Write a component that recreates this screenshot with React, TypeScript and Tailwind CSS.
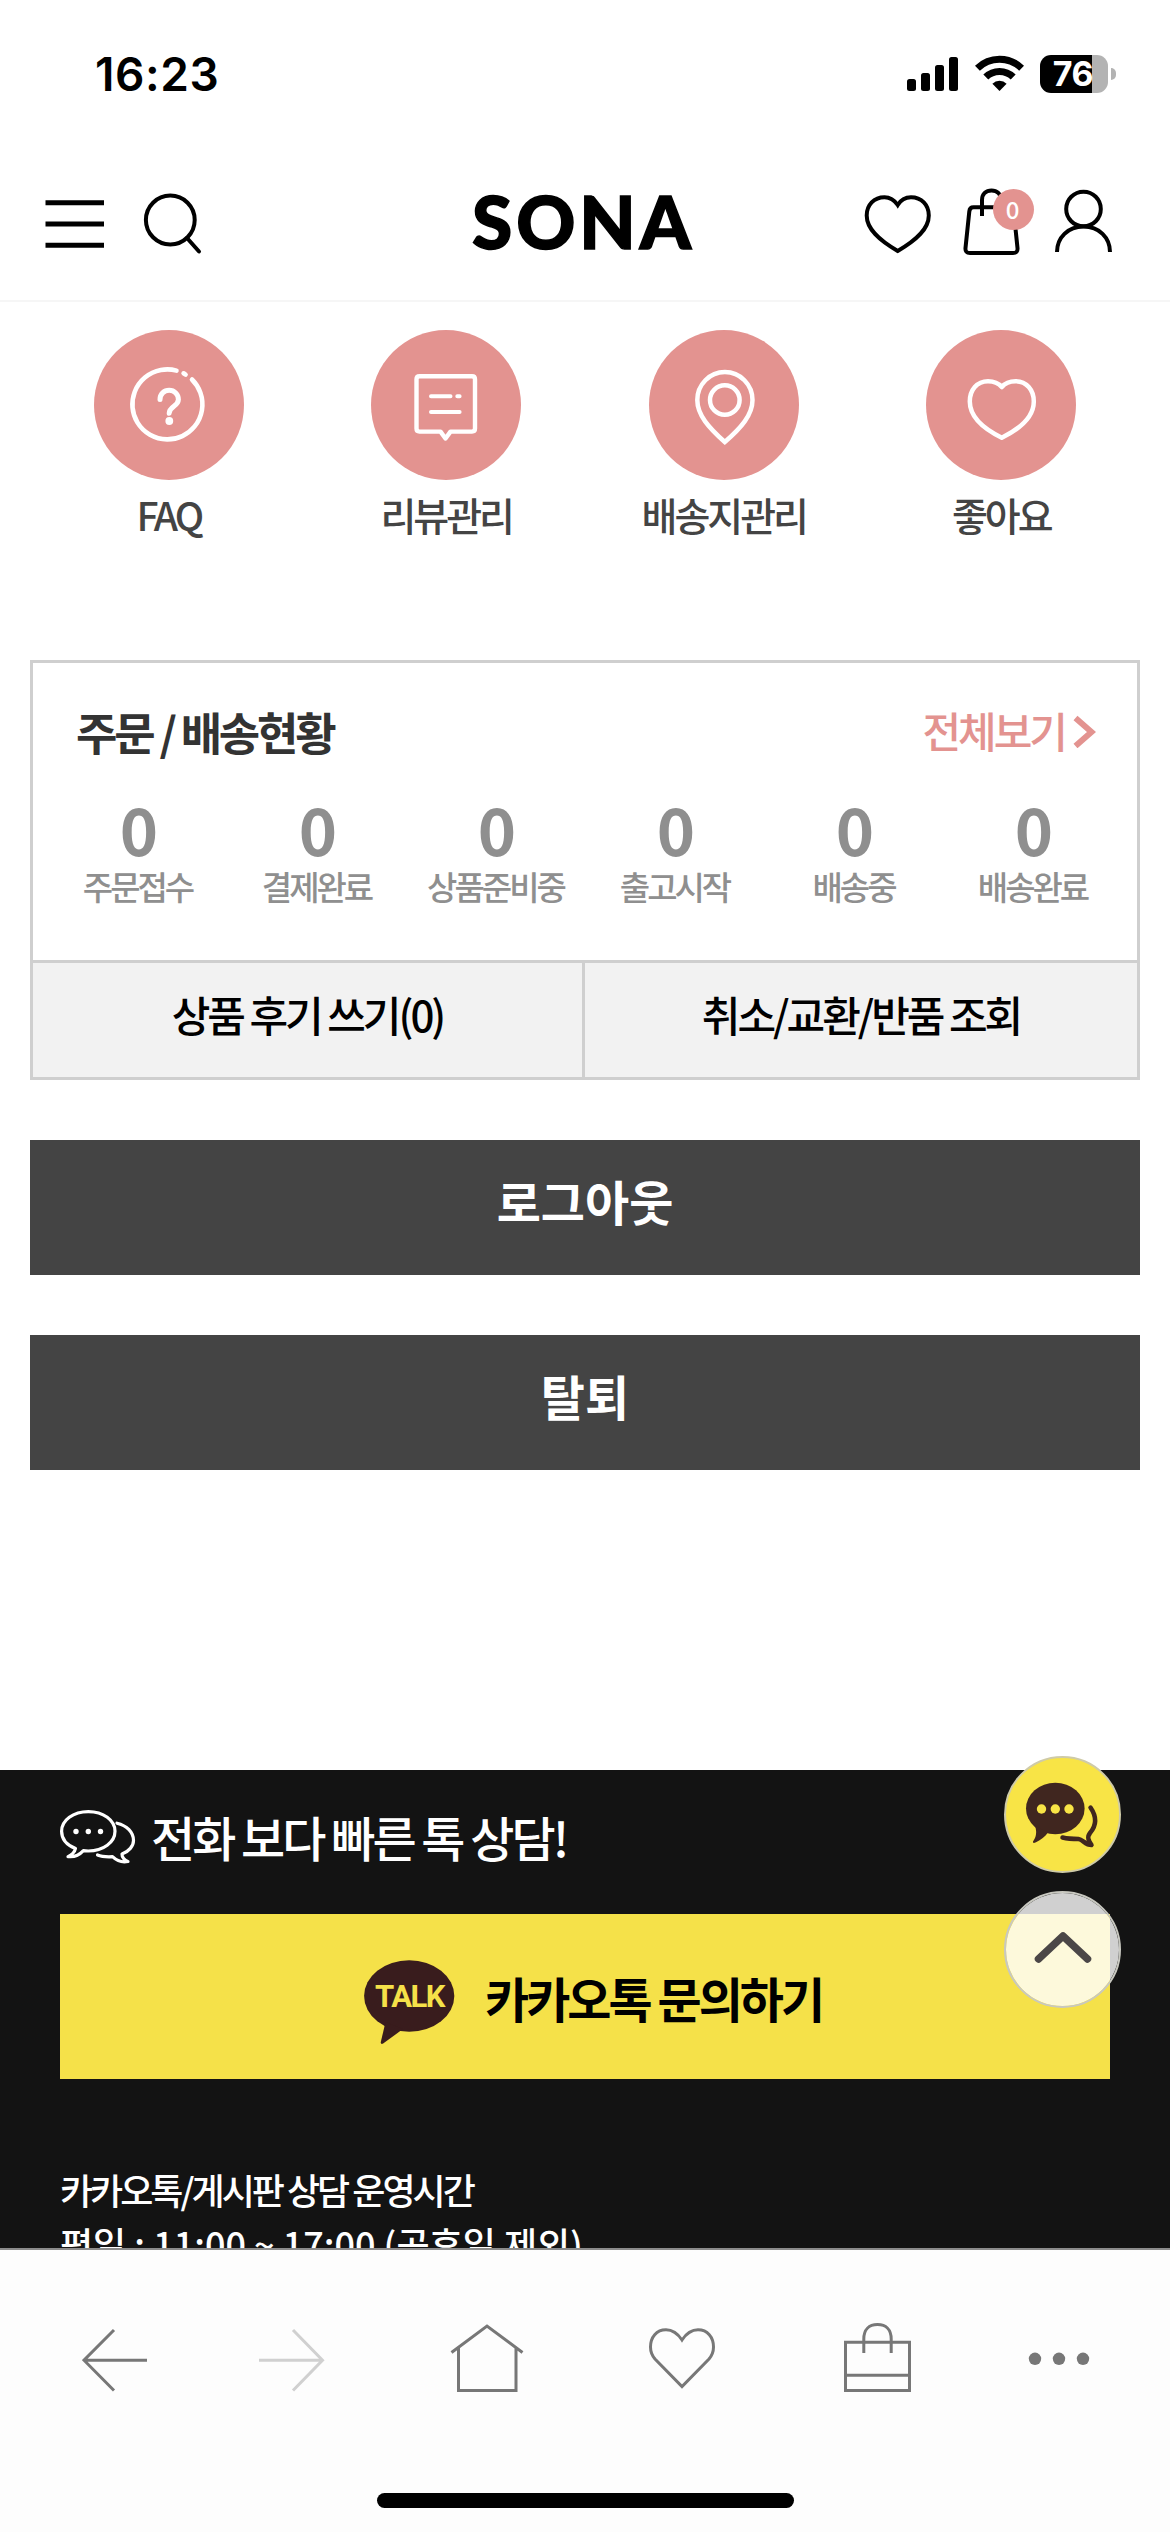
import type { ReactNode } from "react";

const menus = [
  { label: "FAQ", icon: <FaqIcon /> },
  { label: "리뷰관리", icon: <ReviewIcon /> },
  { label: "배송지관리", icon: <PinIcon /> },
  { label: "좋아요", icon: <LikeIcon /> },
];

const orderSteps = [
  { label: "주문접수", count: 0 },
  { label: "결제완료", count: 0 },
  { label: "상품준비중", count: 0 },
  { label: "출고시작", count: 0 },
  { label: "배송중", count: 0 },
  { label: "배송완료", count: 0 },
];

function FaqIcon() {
  return (
    <>
      <path d="M98 49.5A35 35 0 1 1 82.5 40.6" strokeWidth="4.6" />
      <path d="M89.6 43.3L91.6 44.6" strokeWidth="4.6" />
      <path d="M66 69.5C66 64 70 60.3 75.2 60.3S84.4 64.2 84.4 69.5C84.4 76.5 75.4 76 75.2 83.3" strokeWidth="5" />
      <circle cx="75.3" cy="91" r="3.9" fill="#fff" stroke="none" />
    </>
  );
}

function ReviewIcon() {
  return (
    <>
      <path
        d="M48.5 46.3H101Q104 46.3 104 49.3V98.6Q104 101.6 101 101.6H79.5L74.5 108.5L69.5 101.6H48.5Q45.5 101.6 45.5 98.6V49.3Q45.5 46.3 48.5 46.3Z"
        strokeWidth="4.4"
      />
      <path d="M60 66.3H79.5M86.3 66.3H88.6M60 82H88.6" strokeWidth="4" />
    </>
  );
}

function PinIcon() {
  return (
    <>
      <path d="M75.8 112C60 98 48.3 85 48.3 70A27.6 28 0 0 1 103.5 70C103.5 85 92 98 75.8 112Z" strokeWidth="4.5" strokeLinejoin="miter" />
      <circle cx="75.8" cy="70" r="14.8" strokeWidth="4.5" />
    </>
  );
}

function LikeIcon() {
  return (
    <path
      d="M75.8 57C72 52.5 67 51.2 62 51.2C51 51.2 43.8 60 43.8 71.5C43.8 88 58 99 75.8 107.7C93.5 99 107.8 88 107.8 71.5C107.8 60 100.5 51.2 89.5 51.2C84.5 51.2 79.5 52.5 75.8 57Z"
      strokeWidth="4.5"
    />
  );
}

function StatusBar() {
  return (
    <div className="flex h-[149px] items-start justify-between pr-[54px] pl-[95px] font-['Inter',sans-serif] text-black">
      <span className="mt-[46px] text-[46px] leading-[57px] font-semibold tracking-[0.6px]">16:23</span>
      <div className="mt-[55px] flex items-center">
        <svg width="52" height="38" viewBox="0 0 52 38">
          <rect x="0" y="24" width="9" height="12" rx="2.5" />
          <rect x="14" y="18" width="9" height="18" rx="2.5" />
          <rect x="28" y="10" width="9" height="26" rx="2.5" />
          <rect x="42" y="2" width="9" height="34" rx="2.5" />
        </svg>
        <svg className="ml-4" width="49" height="38" viewBox="0 0 49 38" fill="none" stroke="#000">
          <path d="M2.4 13.2A31.5 31.5 0 0 1 46.6 13.2" strokeWidth="7" />
          <path d="M10.8 22A19.5 19.5 0 0 1 38.2 22" strokeWidth="7" />
          <path d="M24.5 36L17.4 28.8A10 10 0 0 1 31.6 28.8Z" fill="#000" stroke="none" />
        </svg>
        <div className="ml-4 flex h-[38px] w-[68px] items-center justify-center rounded-[11px] bg-[linear-gradient(to_right,#000_52px,#b3b3b3_52px)] pr-0.5">
          <span className="text-[34px] leading-[38px] font-bold tracking-[-0.5px] text-white">76</span>
        </div>
        <div className="ml-[3px] h-3 w-[5px] rounded-r-full bg-[#b3b3b3]" />
      </div>
    </div>
  );
}

function Header() {
  return (
    <header className="grid h-[153px] grid-cols-[1fr_auto_1fr] items-start border-b-2 border-[#f6f6f6] pr-[57px] pl-[45px]">
      <div className="mt-10 flex">
        <svg width="60" height="68" viewBox="0 0 60 68" fill="none" stroke="#000" strokeWidth="5">
          <path d="M.5 13.8H59M.5 35H59M.5 56.3H59" />
        </svg>
        <svg className="ml-[38px]" width="60" height="68" viewBox="0 0 60 68" fill="none" stroke="#000" strokeWidth="4">
          <circle cx="27.3" cy="31" r="24.4" />
          <path d="M44 49L56 62.5" strokeLinecap="round" />
        </svg>
      </div>
      <h1 className="mt-8 pl-[9px] font-['Lato',sans-serif] text-[73px] leading-[80px] font-black tracking-[4px] text-black [-webkit-text-stroke:1.5px_#000]">
        SONA
      </h1>
      <div className="mt-[39px] flex justify-end">
        <svg width="70" height="70" viewBox="-1 -6 70 70" fill="none" stroke="#000" strokeWidth="4">
          <path d="M33.7 11C30 5.5 25.5 3.2 20.5 3.2C10 3.2 2.7 11 2.7 21.5C2.7 35 15 46 33.7 57C52.4 46 64.8 35 64.8 21.5C64.8 11 57.5 3.2 47 3.2C41.5 3.2 37 5.5 33.7 11Z" />
        </svg>
        <div className="relative ml-[29px] h-[70px] w-[60px]">
          <svg width="60" height="70" viewBox="0 0 60 70" fill="none" stroke="#000" strokeWidth="4">
            <path d="M11.5 19.3H47.5Q51.3 19.3 51.7 23.5L55.5 60Q56 65 51 65H8Q3 65 3.5 60L7.3 23.5Q7.7 19.3 11.5 19.3Z" />
            <path d="M20 28V12C20 6 24 2.5 29.5 2.5S39 6 39 12V28" />
          </svg>
          <span className="absolute top-px left-[31px] flex size-[41px] items-center justify-center rounded-full bg-[#e39390] pr-0.5 pb-0.5 text-[24px] leading-none font-medium text-white">
            0
          </span>
        </div>
        <svg className="ml-[31px]" width="60" height="70" viewBox="0 0 60 70" fill="none" stroke="#000" strokeWidth="4">
          <circle cx="30.5" cy="21" r="17.3" />
          <path d="M4 64C4 49.5 15 38.5 30.5 38.5S57 49.5 57 64" />
        </svg>
      </div>
    </header>
  );
}

function OrderCard() {
  return (
    <section className="mx-[30px] mt-[114px] h-[420px] border-[3px] border-[#cfcfcf]">
      <div className="flex h-[297px] flex-col">
        <div className="flex items-start justify-between pt-[36px] pr-[41px] pl-[43px]">
          <h2 className="text-[45px] leading-[66px] font-bold tracking-[-3.2px] text-[#333]">주문 / 배송현황</h2>
          <a className="-mt-px flex items-center text-[42px] leading-[63px] font-medium tracking-[-3px] text-[#e39390]">
            전체보기
            <svg className="mt-0.5 ml-[7px]" width="24" height="34" viewBox="0 0 24 34" fill="none" stroke="#e39390" strokeWidth="6">
              <path d="M3.5 4L19.5 18L3.5 32" />
            </svg>
          </a>
        </div>
        <ul className="grid grid-cols-6 px-[15px] text-center text-[#8f8f8f]">
          {orderSteps.map(step => (
            <li key={step.label} className="flex flex-col whitespace-nowrap">
              <b className="mt-[28px] text-[65px] leading-[70px] font-bold tracking-[-3px]">{step.count}</b>
              <span className="text-[33px] leading-[46px] font-medium tracking-[-3px]">{step.label}</span>
            </li>
          ))}
        </ul>
      </div>
      <div className="grid h-[117px] grid-cols-[552px_1fr] border-t-[3px] border-[#cfcfcf] bg-[#f2f2f2] text-center text-[42px] leading-[101px] font-medium tracking-[-3px] text-black">
        <a className="border-r-[3px] border-[#cfcfcf]">상품 후기 쓰기(0)</a>
        <a>취소/교환/반품 조회</a>
      </div>
    </section>
  );
}

function ChatLineIcon() {
  return (
    <svg width="76" height="56" viewBox="0 0 76 56" fill="none" stroke="#fff" strokeWidth="3.2" strokeLinecap="round" strokeLinejoin="round">
      <path d="M15.5 38.5C6.5 35 1.6 28.5 1.6 21.3C1.6 10.3 13.3 1.6 28.3 1.6S55 10.3 55 21.3S43.3 41 28.3 41C26.6 41 25 40.9 23.4 40.7C19 45.5 13.8 47.3 8 46.6C12 44.7 14.7 42 15.5 38.5Z" />
      <path d="M57 13.2C67 15.5 73.5 22.5 73.5 30.5C73.5 36 69 41.5 62 44C61.8 47 64.5 50.5 68 51.5C61 53 56.5 50.5 52.5 46.7C47 47 41 46.5 37.5 45" />
      <g fill="#fff" stroke="none">
        <circle cx="16" cy="21.5" r="2.7" />
        <circle cx="28.3" cy="21.5" r="2.7" />
        <circle cx="40.5" cy="21.5" r="2.7" />
      </g>
    </svg>
  );
}

function Footer() {
  return (
    <footer className="mt-[300px] h-[478px] overflow-hidden bg-[#131313] px-[60px] text-white">
      <div className="flex pt-10">
        <ChatLineIcon />
        <h3 className="-mt-[10px] ml-[15px] h-[74px] text-[48px] leading-[72px] font-medium tracking-[-3px]">전화 보다 빠른 톡 상담!</h3>
      </div>
      <a className="mt-[40px] flex h-[165px] items-start bg-[#f5e149] text-black">
        <span className="relative mt-[46px] ml-[304px] block h-[86px] w-[91px]">
          <svg width="91" height="86" viewBox="0 0 91 86" fill="#391c1d">
            <ellipse cx="45.2" cy="36" rx="45.1" ry="35.7" />
            <path d="M21.5 62L16.7 82.5Q17 85 19.5 83.3L39 69Z" />
          </svg>
          <span className="absolute top-0 left-0 w-full text-center font-['Roboto',sans-serif] text-[31px] leading-[74px] font-bold tracking-[-1.5px] text-[#f5e149]">
            TALK
          </span>
        </span>
        <b className="mt-[47px] ml-[30px] text-[48px] leading-[72px] font-bold tracking-[-3px]">카카오톡 문의하기</b>
      </a>
      <p className="mt-[83px] text-[36px] leading-[54px] font-medium tracking-[-3px]">카카오톡/게시판 상담 운영시간</p>
      <p className="text-[36px] leading-[54px] font-medium">평일 : 11:00 ~ 17:00 (공휴일 제외)</p>
    </footer>
  );
}

function FloatingButtons() {
  return (
    <div className="absolute top-[1756px] left-[1004px] flex flex-col gap-[18px]">
      <button className="size-[117px] rounded-full border-2 border-[#cfcba8] bg-[#f8e446]">
        <svg width="113" height="113" viewBox="0 0 113 113" fill="#40261f">
          <ellipse cx="49.3" cy="50.5" rx="29.3" ry="25.7" />
          <path d="M29 68C31.5 75 29.5 80 27 83.5Q26.5 86 30 84.3C35 82 39 78.5 42 74.5Z" />
          <path
            d="M84.5 49.5C91 59 90.5 67.5 84 75C80.5 79.5 83 83 85.5 87C79 87 77 81.5 72.5 81C67 81 62 80.8 56.5 79.5"
            fill="none"
            stroke="#40261f"
            strokeWidth="4.5"
            strokeLinecap="round"
            strokeLinejoin="round"
          />
          <g fill="#f8e446">
            <circle cx="35.5" cy="51" r="4.7" />
            <circle cx="49.3" cy="51" r="4.7" />
            <circle cx="63" cy="51" r="4.7" />
          </g>
        </svg>
      </button>
      <button className="size-[117px] rounded-full border-2 border-[#c8c8c0] bg-white/80 bg-clip-padding">
        <svg width="113" height="113" viewBox="0 0 113 113" fill="none" stroke="#4b4747" strokeWidth="7.5" strokeLinecap="round" strokeLinejoin="round">
          <path d="M32.5 66L57 43L81.5 66" />
        </svg>
      </button>
    </div>
  );
}

function NavIcon({ width, className, children }: { width: number; className: string; children: ReactNode }) {
  return (
    <svg className={className} width={width} height="76" viewBox={`0 0 ${width} 76`} fill="none" stroke="#777" strokeWidth="3">
      {children}
    </svg>
  );
}

function BottomBar() {
  return (
    <nav className="h-[284px] border-t-2 border-[#8c8c8c] bg-[#fdfdfd]">
      <div className="flex pt-[70px]">
        <NavIcon width={66} className="ml-[82px]">
          <path d="M65 40.2H2M32 10L2 40.2L32 70.5" />
        </NavIcon>
        <NavIcon width={66} className="ml-[111px]">
          <path d="M0 40.2H63M34 10L63.5 40.2L34 70.5" stroke="#d0d0d0" />
        </NavIcon>
        <NavIcon width={74} className="ml-[125px]">
          <path d="M1.5 32.5L37 6L72.5 32.5M8.5 27V70.5H66V27" />
        </NavIcon>
        <NavIcon width={68} className="ml-[124px]">
          <path d="M34 20C29 12.5 24 9.8 18 9.8C8.5 9.8 2.5 17 2.5 27C2.5 32 4 35.5 7 39L34 66.5L61 39C64 35.5 65.5 32 65.5 27C65.5 17 59.5 9.8 50 9.8C44 9.8 39 12.5 34 20Z" />
        </NavIcon>
        <NavIcon width={68} className="ml-[128px]">
          <path d="M1.5 22.3H65.5V70.5H1.5ZM1.5 55.3H65.5M19.8 33V19C19.8 9.5 25 4.5 33.5 4.5S47.2 9.5 47.2 19V33" />
        </NavIcon>
        <NavIcon width={62} className="ml-[116px]">
          <g fill="#777" stroke="none">
            <circle cx="7" cy="38.8" r="6.2" />
            <circle cx="31" cy="38.8" r="6.2" />
            <circle cx="55" cy="38.8" r="6.2" />
          </g>
        </NavIcon>
      </div>
      <div className="mx-auto mt-[97px] h-[15px] w-[417px] rounded-full bg-black" />
    </nav>
  );
}

export default function App() {
  return (
    <div className="relative h-[2532px] w-[1170px] overflow-hidden bg-white font-['Noto_Sans_CJK_KR',sans-serif]">
      <StatusBar />
      <Header />

      <ul className="mx-[30px] grid grid-cols-4 pt-[28px]">
        {menus.map(menu => (
          <li key={menu.label} className="flex flex-col items-center">
            <div className="size-[150px] rounded-full bg-[#e39390]">
              <svg width="150" height="150" viewBox="0 0 150 150" fill="none" stroke="#fff" strokeLinecap="round" strokeLinejoin="round">
                {menu.icon}
              </svg>
            </div>
            <span className="mt-[5px] mb-0.5 text-[39px] leading-[59px] font-medium tracking-[-3px] text-[#444]">{menu.label}</span>
          </li>
        ))}
      </ul>

      <OrderCard />

      <button className="mx-[30px] mt-[60px] block h-[135px] w-[1110px] bg-[#444] pb-[16px] text-[48px] leading-[72px] font-bold text-white">
        로그아웃
      </button>
      <button className="mx-[30px] mt-[60px] block h-[135px] w-[1110px] bg-[#444] pb-[16px] text-[48px] leading-[72px] font-bold text-white">
        탈퇴
      </button>

      <Footer />
      <BottomBar />
      <FloatingButtons />
    </div>
  );
}
